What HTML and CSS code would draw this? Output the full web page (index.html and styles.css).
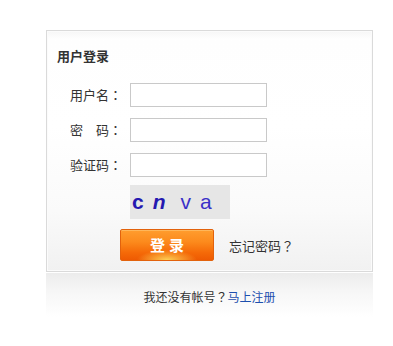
FILE: index.html
```html
<!DOCTYPE html>
<html lang="zh">
<head>
<meta charset="utf-8">
<title>用户登录</title>
<link rel="stylesheet" href="styles.css">
</head>
<body>
<div class="wrap">
  <div class="box">
    <h2 class="title">用户登录</h2>
    <form class="form">
      <div class="row">
        <label class="label">用户名<span class="punct" lang="ja">：</span></label>
        <input class="input" type="text">
      </div>
      <div class="row">
        <label class="label">密　码<span class="punct" lang="ja">：</span></label>
        <input class="input" type="password">
      </div>
      <div class="row">
        <label class="label">验证码<span class="punct" lang="ja">：</span></label>
        <input class="input" type="text">
      </div>
      <div class="captcha-row">
        <div class="captcha"><span class="ch c1">c</span><span class="ch c2">n</span><span class="ch c3">v</span><span class="ch c4">a</span></div>
      </div>
      <div class="actions">
        <button class="btn" type="button">登录</button>
        <a class="forgot">忘记密码<span class="punct" lang="ja">？</span></a>
      </div>
    </form>
  </div>
  <div class="foot">
    <p class="reg">我还没有帐号<span class="punct" lang="ja">？</span><a class="reg-link">马上注册</a></p>
  </div>
</div>
</body>
</html>
```

FILE: styles.css
```css
html, body {
  margin: 0;
  padding: 0;
  background: #fff;
}
body {
  font-family: "Noto Sans CJK SC", "Noto Sans", sans-serif;
  color: #333;
}
.punct {
  font-family: "Noto Sans CJK JP", "Noto Sans CJK SC", sans-serif;
  font-feature-settings: "locl" 0;
}
.wrap {
  width: 327px;
  margin: 30px 0 0 46px;
}
.box {
  box-sizing: border-box;
  height: 242px;
  border: 1px solid #dadada;
  box-shadow: inset 0 0 0 1px #fbfbfb;
  background: linear-gradient(#f6f6f6 0, #fefefe 8px, #ffffff 40%, #fafafa 75%, #f1f1f1 100%);
  padding: 16px 10px 0 10px;
}
.title {
  margin: 0;
  font-size: 13px;
  line-height: 18px;
  font-weight: bold;
  color: #333;
}
.form {
  margin: 18px 0 0 13px;
}
.row {
  display: flex;
  align-items: center;
  margin-bottom: 11px;
}
.label {
  width: 52px;
  margin-right: 8px;
  font-size: 13px;
  line-height: 24px;
  color: #333;
  white-space: nowrap;
}
.input {
  box-sizing: border-box;
  width: 137px;
  height: 24px;
  margin: 0;
  border: 1px solid #c9c9c9;
  background: #fff;
  padding: 0 4px;
}
.captcha-row {
  margin-top: -3px;
  padding-left: 60px;
}
.captcha {
  width: 100px;
  height: 34px;
  background: #e6e6e6;
  box-sizing: border-box;
  padding-left: 2px;
  font-family: "Liberation Sans", Arial, sans-serif;
  font-size: 21px;
  line-height: 34px;
  color: #2a20b8;
  white-space: nowrap;
}
.ch {
  display: inline-block;
}
.c1 { font-weight: bold; color: #2418b0; }
.c2 { font-weight: bold; font-style: italic; margin-left: 9px; color: #2418b0; }
.c3 { margin-left: 15px; color: #3a30c8; }
.c4 { margin-left: 9px; color: #3a30c8; }
.actions {
  display: flex;
  align-items: center;
  margin-top: 10px;
  padding-left: 50px;
}
.btn {
  box-sizing: border-box;
  width: 94px;
  height: 32px;
  margin: 0;
  padding: 0 0 0 4px;
  border: 1px solid #e2620c;
  border-radius: 2px;
  background:
    radial-gradient(ellipse 30px 10px at 50% 100%, rgba(255, 215, 90, 0.95), rgba(255, 190, 60, 0) 100%),
    linear-gradient(#ff9d2e 0%, #fc8a1c 40%, #f56a08 75%, #ee5a02 100%);
  box-shadow: inset 0 1px 0 rgba(255, 200, 120, 0.6);
  color: #fff;
  font-family: "Noto Sans CJK SC", sans-serif;
  font-size: 15px;
  font-weight: bold;
  letter-spacing: 4px;
  line-height: 30px;
}
.forgot {
  margin-left: 15px;
  font-size: 13px;
  color: #333;
}
.foot {
  height: 44px;
  margin-top: 1px;
  background: linear-gradient(#ececec 0, #f6f6f6 40%, #ffffff 100%);
}
.reg {
  margin: 0;
  padding-top: 15px;
  text-align: center;
  font-size: 12px;
  line-height: 18px;
  color: #333;
}
.reg-link {
  color: #1d4fae;
}
```
